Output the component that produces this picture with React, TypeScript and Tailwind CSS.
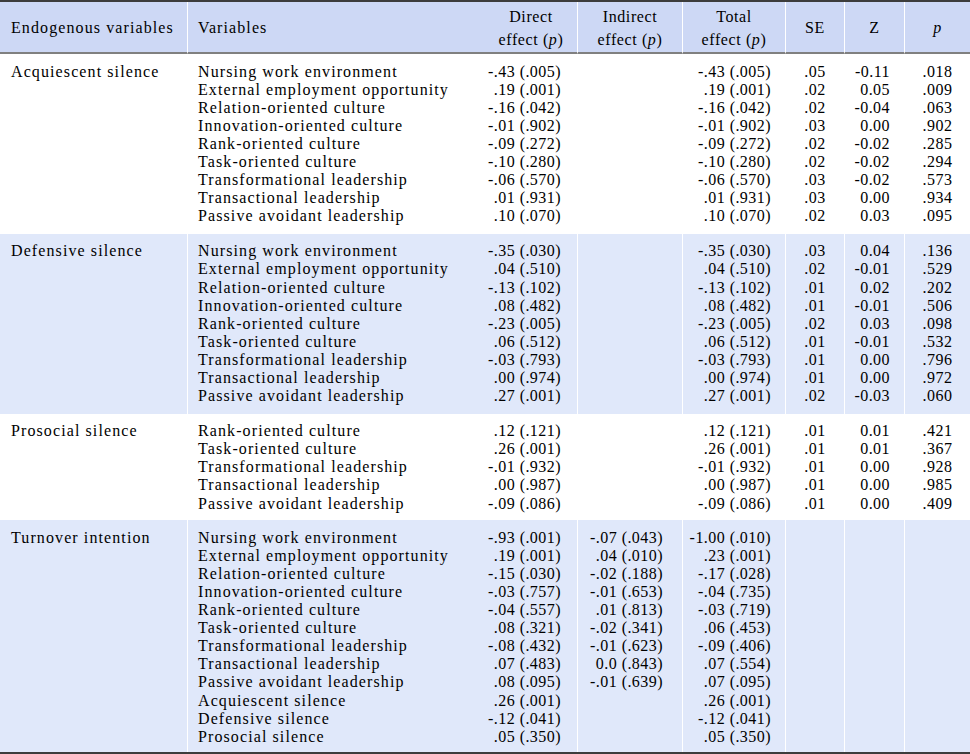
import React from "react";

type Row = [string, string, string, string, string, string, string];

const groups: { name: string; tinted: boolean; pb: string; rows: Row[] }[] = [
  {
    name: "Acquiescent silence",
    tinted: false,
    pb: "pb-[8.5px]",
    rows: [
      ["Nursing work environment", "-.43 (.005)", "", "-.43 (.005)", ".05", "-0.11", ".018"],
      ["External employment opportunity", ".19 (.001)", "", ".19 (.001)", ".02", "0.05", ".009"],
      ["Relation-oriented culture", "-.16 (.042)", "", "-.16 (.042)", ".02", "-0.04", ".063"],
      ["Innovation-oriented culture", "-.01 (.902)", "", "-.01 (.902)", ".03", "0.00", ".902"],
      ["Rank-oriented culture", "-.09 (.272)", "", "-.09 (.272)", ".02", "-0.02", ".285"],
      ["Task-oriented culture", "-.10 (.280)", "", "-.10 (.280)", ".02", "-0.02", ".294"],
      ["Transformational leadership", "-.06 (.570)", "", "-.06 (.570)", ".03", "-0.02", ".573"],
      ["Transactional leadership", ".01 (.931)", "", ".01 (.931)", ".03", "0.00", ".934"],
      ["Passive avoidant leadership", ".10 (.070)", "", ".10 (.070)", ".02", "0.03", ".095"],
    ],
  },
  {
    name: "Defensive silence",
    tinted: true,
    pb: "pb-[8.5px]",
    rows: [
      ["Nursing work environment", "-.35 (.030)", "", "-.35 (.030)", ".03", "0.04", ".136"],
      ["External employment opportunity", ".04 (.510)", "", ".04 (.510)", ".02", "-0.01", ".529"],
      ["Relation-oriented culture", "-.13 (.102)", "", "-.13 (.102)", ".01", "0.02", ".202"],
      ["Innovation-oriented culture", ".08 (.482)", "", ".08 (.482)", ".01", "-0.01", ".506"],
      ["Rank-oriented culture", "-.23 (.005)", "", "-.23 (.005)", ".02", "0.03", ".098"],
      ["Task-oriented culture", ".06 (.512)", "", ".06 (.512)", ".01", "-0.01", ".532"],
      ["Transformational leadership", "-.03 (.793)", "", "-.03 (.793)", ".01", "0.00", ".796"],
      ["Transactional leadership", ".00 (.974)", "", ".00 (.974)", ".01", "0.00", ".972"],
      ["Passive avoidant leadership", ".27 (.001)", "", ".27 (.001)", ".02", "-0.03", ".060"],
    ],
  },
  {
    name: "Prosocial silence",
    tinted: false,
    pb: "pb-[7.5px]",
    rows: [
      ["Rank-oriented culture", ".12 (.121)", "", ".12 (.121)", ".01", "0.01", ".421"],
      ["Task-oriented culture", ".26 (.001)", "", ".26 (.001)", ".01", "0.01", ".367"],
      ["Transformational leadership", "-.01 (.932)", "", "-.01 (.932)", ".01", "0.00", ".928"],
      ["Transactional leadership", ".00 (.987)", "", ".00 (.987)", ".01", "0.00", ".985"],
      ["Passive avoidant leadership", "-.09 (.086)", "", "-.09 (.086)", ".01", "0.00", ".409"],
    ],
  },
  {
    name: "Turnover intention",
    tinted: true,
    pb: "pb-[6.5px]",
    rows: [
      ["Nursing work environment", "-.93 (.001)", "-.07 (.043)", "-1.00 (.010)", "", "", ""],
      ["External employment opportunity", ".19 (.001)", ".04 (.010)", ".23 (.001)", "", "", ""],
      ["Relation-oriented culture", "-.15 (.030)", "-.02 (.188)", "-.17 (.028)", "", "", ""],
      ["Innovation-oriented culture", "-.03 (.757)", "-.01 (.653)", "-.04 (.735)", "", "", ""],
      ["Rank-oriented culture", "-.04 (.557)", ".01 (.813)", "-.03 (.719)", "", "", ""],
      ["Task-oriented culture", ".08 (.321)", "-.02 (.341)", ".06 (.453)", "", "", ""],
      ["Transformational leadership", "-.08 (.432)", "-.01 (.623)", "-.09 (.406)", "", "", ""],
      ["Transactional leadership", ".07 (.483)", "0.0 (.843)", ".07 (.554)", "", "", ""],
      ["Passive avoidant leadership", ".08 (.095)", "-.01 (.639)", ".07 (.095)", "", "", ""],
      ["Acquiescent silence", ".26 (.001)", "", ".26 (.001)", "", "", ""],
      ["Defensive silence", "-.12 (.041)", "", "-.12 (.041)", "", "", ""],
      ["Prosocial silence", ".05 (.350)", "", ".05 (.350)", "", "", ""],
    ],
  },
];

const lines = (rows: Row[], i: number) =>
  rows.map((r, k) => (
    <div key={k} className="h-[18.1px] whitespace-nowrap">
      {r[i] === "" ? "\u00a0" : r[i]}
    </div>
  ));

export default function App() {
  const hd =
    "border-l border-white align-middle font-normal pt-[2px] leading-[23.5px] tracking-[0.6px]";
  return (
    <div
      className="w-[970px] bg-white text-black text-[16px]"
      style={{ fontFamily: '"Liberation Serif", "Times New Roman", serif' }}
    >
      <div className="border-t-2 border-b-2 border-[#3c3c3c]">
        <table className="w-[970px] table-fixed border-separate border-spacing-0">
          <colgroup>
            <col className="w-[187px]" />
            <col className="w-[290px]" />
            <col className="w-[100px]" />
            <col className="w-[105px]" />
            <col className="w-[103px]" />
            <col className="w-[59px]" />
            <col className="w-[60px]" />
            <col className="w-[66px]" />
          </colgroup>
          <thead>
            <tr className="h-[52px] bg-[#cdd8f5]">
              <th className="border-b-2 border-[#808080] pl-[11px] pt-[2px] text-left align-middle font-normal tracking-[1.1px]">
                Endogenous variables
              </th>
              <th className="border-b-2 border-b-[#808080] border-l border-l-white pl-[10px] pt-[2px] text-left align-middle font-normal tracking-[1.1px]">
                Variables
              </th>
              <th className="border-b-2 border-[#808080] text-center align-middle font-normal pt-[2px] leading-[23.5px] tracking-[0.6px] pl-[8px]">
                Direct
                <br />
                effect (<i>p</i>)
              </th>
              <th className={`${hd} border-b-2 border-b-[#808080] border-l-white text-center`}>
                Indirect
                <br />
                effect (<i>p</i>)
              </th>
              <th className={`${hd} border-b-2 border-b-[#808080] border-l-white text-center`}>
                Total
                <br />
                effect (<i>p</i>)
              </th>
              <th className={`${hd} border-b-2 border-b-[#808080] border-l-white text-center`}>SE</th>
              <th className={`${hd} border-b-2 border-b-[#808080] border-l-white text-center`}>Z</th>
              <th className={`${hd} border-b-2 border-b-[#808080] border-l-white text-center`}>
                <i>p</i>
              </th>
            </tr>
          </thead>
          <tbody>
            {groups.map((g) => {
              const bg = g.tinted ? "bg-[#e0e8fa]" : "bg-white";
              const cell = `align-top pt-[8.5px] ${g.pb} leading-[18.1px]`;
              return (
                <tr key={g.name} className={bg}>
                  <td className={`${cell} pl-[11px] tracking-[1.1px] whitespace-nowrap`}>
                    {g.name}
                  </td>
                  <td className={`${cell} border-l border-white pl-[10px] tracking-[1.1px]`}>
                    {lines(g.rows, 0)}
                  </td>
                  <td className={`${cell} pr-[16px] text-right tracking-[0.45px]`}>
                    {lines(g.rows, 1)}
                  </td>
                  <td className={`${cell} border-l border-white pr-[19px] text-right tracking-[0.45px]`}>
                    {lines(g.rows, 2)}
                  </td>
                  <td className={`${cell} border-l border-white pr-[14px] text-right tracking-[0.45px]`}>
                    {lines(g.rows, 3)}
                  </td>
                  <td className={`${cell} border-l border-white text-center tracking-[0.45px]`}>
                    {lines(g.rows, 4)}
                  </td>
                  <td className={`${cell} border-l border-white pr-[14px] text-right tracking-[0.45px]`}>
                    {lines(g.rows, 5)}
                  </td>
                  <td className={`${cell} border-l border-white text-center tracking-[0.45px]`}>
                    {lines(g.rows, 6)}
                  </td>
                </tr>
              );
            })}
          </tbody>
        </table>
      </div>
    </div>
  );
}
